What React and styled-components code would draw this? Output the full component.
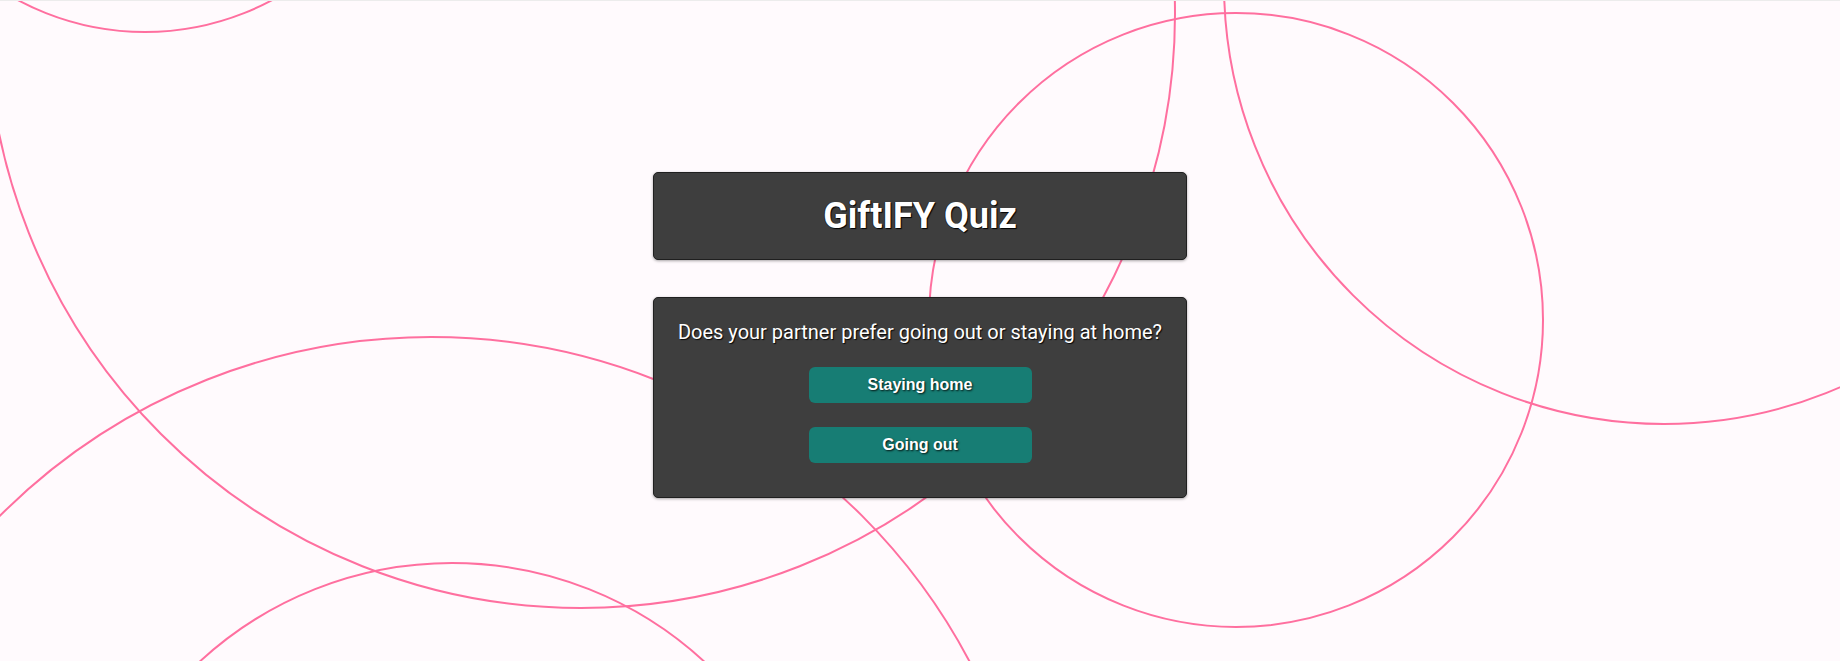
import React from "react";
import styled, { createGlobalStyle } from "styled-components";

const GlobalStyle = createGlobalStyle`
  html, body {
    margin: 0;
    padding: 0;
    background: #fffafd;
    font-family: Roboto, "Liberation Sans", Arial, sans-serif;
    overflow: hidden;
  }
  * { box-sizing: border-box; }
`;

const Page = styled.div`
  position: relative;
  height: 100vh;
  border-top: 1px solid #ececec;
  overflow: hidden;
`;

const Backdrop = styled.svg`
  position: absolute;
  inset: 0;
  width: 100%;
  height: 100%;
  z-index: 0;
  pointer-events: none;
`;

const Content = styled.main`
  position: relative;
  z-index: 1;
  display: flex;
  flex-direction: column;
  align-items: center;
  gap: 37px;
  padding-top: 171px;
`;

const Card = styled.section`
  width: 534px;
  background: #3e3e3e;
  border: 1px solid #1f1f1f;
  border-radius: 5px;
  box-shadow: 0 1px 3px rgba(0, 0, 0, 0.35);
  display: flex;
  flex-direction: column;
  align-items: center;
`;

const HeaderCard = styled(Card)`
  height: 88px;
  justify-content: center;
`;

const QuestionCard = styled(Card)`
  height: 201px;
  padding-top: 22px;
`;

const Title = styled.h1`
  margin: 0;
  font-family: Roboto, sans-serif;
  font-weight: 700;
  font-size: 36px;
  color: #ffffff;
  text-shadow: 1px 1px 1px #000, -1px 0 0 rgba(0,0,0,0.4);
`;

const Question = styled.p`
  margin: 0 0 23px;
  font-family: Roboto, sans-serif;
  font-size: 20px;
  color: #ffffff;
  text-shadow: 1px 1px 1px rgba(0, 0, 0, 0.9);
`;

const Options = styled.div`
  display: flex;
  flex-direction: column;
  gap: 24px;
`;

const OptionButton = styled.button`
  width: 223px;
  height: 36px;
  border: none;
  border-radius: 6px;
  background: #177d74;
  color: #ffffff;
  font-family: "Liberation Sans", Arial, sans-serif;
  font-weight: 700;
  font-size: 16px;
  text-shadow: 1px 1px 2px rgba(0, 0, 0, 0.85);
  cursor: pointer;
`;

const circles = [
  { cx: 145, cy: -238, r: 269 },
  { cx: 581, cy: 13, r: 594 },
  { cx: 1236, cy: 319, r: 307 },
  { cx: 1664, cy: -17, r: 440 },
  { cx: 431, cy: 945, r: 609 },
  { cx: 452, cy: 934, r: 372 },
];

export default function App() {
  return (
    <>
      <GlobalStyle />
      <Page>
        <Backdrop viewBox="0 0 1840 661" preserveAspectRatio="xMinYMin slice">
          {circles.map((c, i) => (
            <circle key={i} cx={c.cx} cy={c.cy} r={c.r} fill="none" stroke="#ff6f9f" strokeWidth="2" />
          ))}
        </Backdrop>
        <Content>
          <HeaderCard>
            <Title>GiftIFY Quiz</Title>
          </HeaderCard>
          <QuestionCard>
            <Question>Does your partner prefer going out or staying at home?</Question>
            <Options>
              <OptionButton>Staying home</OptionButton>
              <OptionButton>Going out</OptionButton>
            </Options>
          </QuestionCard>
        </Content>
      </Page>
    </>
  );
}
